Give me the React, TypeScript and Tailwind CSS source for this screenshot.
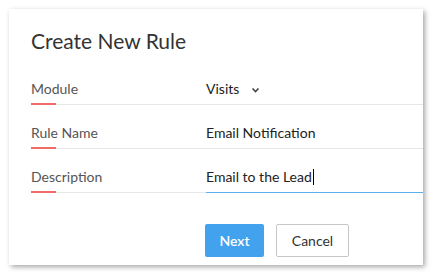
import { ReactNode } from 'react'

function Row({ label, children, focused }: { label: string; children: ReactNode; focused?: boolean }) {
  return (
    <div className="flex h-[44px]">
      <div className="relative w-[175px] border-b border-[#e6e6e6] pt-[18px] text-[#555] leading-[20px]">
        {label}
        <span className="absolute left-0 bottom-[-1px] h-[2px] w-[25px] bg-[#ef6c67]" />
      </div>
      <div
        className={
          'flex-1 pt-[18px] leading-[20px] text-[#222] ' +
          (focused ? 'border-b border-[#5ab0ea]' : 'border-b border-[#e6e6e6]')
        }
      >
        {children}
      </div>
    </div>
  )
}

export default function App() {
  return (
    <div className="h-[275px] w-[433px] bg-white pl-[9px] pt-[9px]" style={{ fontFamily: 'Lato, "Open Sans", sans-serif' }}>
      <div className="flex h-[256px] w-[414px] flex-col bg-white pl-[22px] text-[14px] shadow-[2px_2px_5px_rgba(0,0,0,0.35)]">
        <h1 className="mt-[19px] text-[21px] leading-[26px] font-normal text-[#333]">Create New Rule</h1>

        <div className="mt-[7px]">
          <Row label="Module">
            <span className="inline-flex items-center">
              Visits
              <svg className="ml-[12px] mt-[2px]" width="9" height="6" viewBox="0 0 9 6" fill="none">
                <path d="M1.5 1.5 L4.5 4.5 L7.5 1.5" stroke="#444" strokeWidth="1.6" />
              </svg>
            </span>
          </Row>
          <Row label="Rule Name">Email Notification</Row>
          <Row label="Description" focused>
            <span className="inline-flex items-center">
              Email to the Lead
              <span className="ml-[1px] inline-block h-[16px] w-[1px] bg-black" />
            </span>
          </Row>
        </div>

        <div className="mt-[31px] flex gap-[12px] pl-[174px]">
          <button className="h-[33px] w-[59px] rounded-[2px] bg-[#42a2ee] text-[14px] font-semibold text-white">
            Next
          </button>
          <button className="h-[33px] w-[73px] rounded-[2px] border border-[#c6c6c6] bg-white text-[14px] text-[#333]">
            Cancel
          </button>
        </div>
      </div>
    </div>
  )
}
